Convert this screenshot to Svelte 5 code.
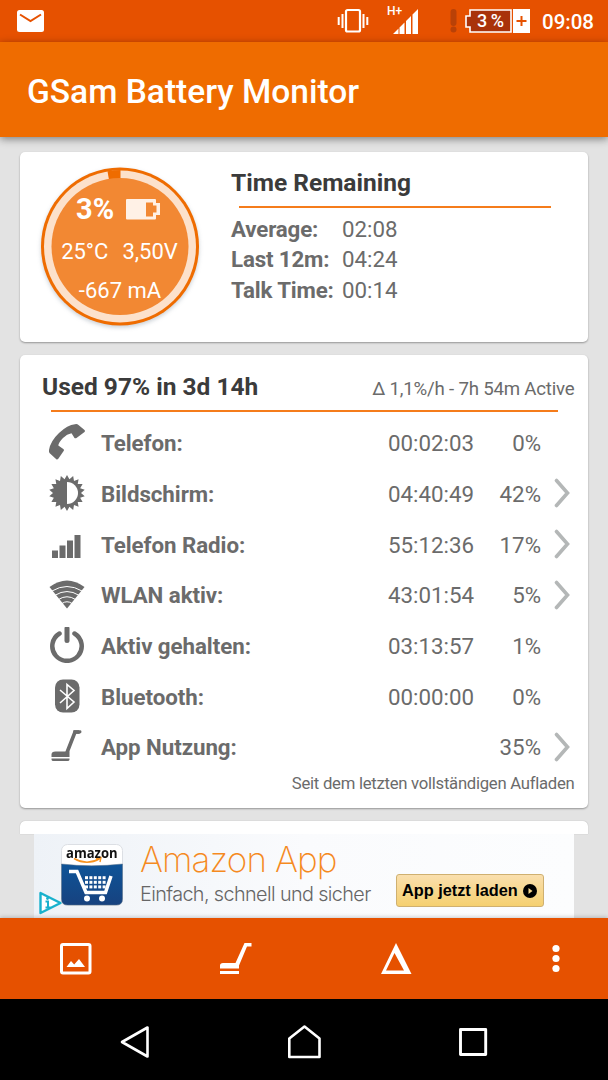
<script lang="ts">
	type Usage = {
		icon: string;
		label: string;
		time: string;
		percent: string;
		more: boolean;
	};

	let remaining = [
		{ label: 'Average:', value: '02:08' },
		{ label: 'Last 12m:', value: '04:24' },
		{ label: 'Talk Time:', value: '00:14' }
	];

	let usage: Usage[] = [
		{ icon: 'phone', label: 'Telefon:', time: '00:02:03', percent: '0%', more: false },
		{ icon: 'screen', label: 'Bildschirm:', time: '04:40:49', percent: '42%', more: true },
		{ icon: 'radio', label: 'Telefon Radio:', time: '55:12:36', percent: '17%', more: true },
		{ icon: 'wifi', label: 'WLAN aktiv:', time: '43:01:54', percent: '5%', more: true },
		{ icon: 'power', label: 'Aktiv gehalten:', time: '03:13:57', percent: '1%', more: false },
		{ icon: 'bluetooth', label: 'Bluetooth:', time: '00:00:00', percent: '0%', more: false },
		{ icon: 'apps', label: 'App Nutzung:', time: '', percent: '35%', more: true }
	];

	// sawtooth outline of the brightness icon
	const teeth = 18;
	const sun = Array.from({ length: teeth * 2 }, (_, i) => {
		const r = i % 2 ? 14 : 18;
		const a = (i * Math.PI) / teeth - Math.PI / 2;
		return `${(18 + r * Math.cos(a)).toFixed(2)},${(18 + r * Math.sin(a)).toFixed(2)}`;
	}).join(' ');

	const cartDots = [0, 1, 2, 3, 4].flatMap((x) => [0, 1, 2].map((y) => ({ x, y })));
</script>

<div class="screen">
	<div class="status">
		<svg class="mail" width="28" height="24" viewBox="0 0 28 24">
			<rect x="0" y="1" width="27" height="22" rx="2.500" fill="#fff" />
			<path d="M3 5.500l10.500 6.500 10.500-6.500" fill="none" stroke="#e65100" stroke-width="2" />
		</svg>
		<svg class="vibrate" width="32" height="26" viewBox="0 0 32 26">
			<rect x="9" y="2" width="14" height="21.500" rx="1.500" fill="none" stroke="#fff" stroke-width="2.200" />
			<path d="M5.500 6v14M26.500 6v14M1.700 9v8M30.300 9v8" stroke="#fff" stroke-width="2" />
		</svg>
		<div class="signal">
			<span>H+</span>
			<svg width="26" height="26" viewBox="0 0 26 26">
				<path d="M0 25l5.500-5.500v5.500zM6.500 25v-6.500l5-5v11.500zM13 25V12l5-5v18zM19.500 25V5.500l5.500-5.500v25z" fill="#fff" />
			</svg>
		</div>
		<svg class="alert" width="7" height="24" viewBox="0 0 7 24">
			<rect x="0.5" y="0" width="6" height="17" rx="3" fill="#b94107" />
			<circle cx="3.500" cy="20.500" r="3" fill="#b94107" />
		</svg>
		<div class="battery">
			<svg width="65" height="24" viewBox="0 0 65 24">
				<path d="M5 1h41v22H5v-5H1V7h4z" fill="#a9330a" stroke="#fff" stroke-width="1.600" />
				<rect x="48" y="0" width="17" height="24" fill="#fff" />
				<path d="M51.500 12h10M56.500 7v10" stroke="#e65100" stroke-width="2" />
			</svg>
			<span>3 %</span>
		</div>
		<span class="clock">09:08</span>
	</div>

	<header><h1>GSam Battery Monitor</h1></header>

	<main>
		<section class="card summary">
			<div class="gauge">
				<svg width="160" height="164" viewBox="0 0 160 164">
					<circle cx="79" cy="79.500" r="79" fill="#ef6c00" />
					<circle cx="79" cy="79.500" r="76" fill="#fce1cb" />
					<path d="M79.500 80V3a76.500 76.500 0 0 0-13 1.200z" fill="#ef6c00" />
					<circle cx="79" cy="79.500" r="68.500" fill="#f28833" />
				</svg>
				<div class="readings">
					<div class="level">
						<b>3%</b>
						<svg width="34" height="21" viewBox="0 0 34 21">
							<path d="M1 0h28q1 0 1 1v3h4v12h-4v3.500q0 1-1 1H1q-1 0-1-1V1q0-1 1-1zM20 3.500v14h7v-4h3.500v-7H27v-3z" fill="#fff1e6" fill-rule="evenodd" />
						</svg>
					</div>
					<div class="temp"><span>25°C</span><span>3,50V</span></div>
					<div class="current">-667 mA</div>
				</div>
			</div>
			<div class="remaining">
				<h2>Time Remaining</h2>
				<div class="rule"></div>
				{#each remaining as item}
					<div class="line"><b>{item.label}</b><span>{item.value}</span></div>
				{/each}
			</div>
		</section>

		<section class="card used">
			<div class="head">
				<h2>Used 97% in 3d 14h</h2>
				<span>Δ 1,1%/h - 7h 54m Active</span>
			</div>
			<div class="rule"></div>
			{#each usage as row}
				<div class="row">
					<svg class="icon" width="36" height="36" viewBox="0 0 36 36">
						{#if row.icon === 'phone'}
							<path d="M26 0.300q2-0.600 3.500 0.700l6 5q0.900 0.900 0 2l-8 6q-1.200 0.700-2 0l-3-4.700q-4.500 0.700-8.500 4.700-4.500 4.500-4.700 7.500l5 3.500q1 0.800 0.500 1.800l-5.500 8q-1 1.200-2 0.500l-6.800-6.300q-0.700-1-0.500-3Q1.500 17 10 9T26 0.300z" />
						{:else if row.icon === 'screen'}
							<polygon points={sun} />
							<path d="M18 7a11 11 0 0 1 0 22z" fill="#fff" />
						{:else if row.icon === 'radio'}
							<path d="M3 24.500h6v7.500H3zM10.500 19.500h6v12.500h-6zM18 14.500h6v17.500h-6zM25.500 9h6v23h-6z" />
						{:else if row.icon === 'wifi'}
							<path d="M0.500 11q17.500-13 35 0L18 32.500z" />
							<g fill="none" stroke="#fff" stroke-width="1">
								<path d="M3 15q15-9 30 0" />
								<path d="M6 19.300q12-7.500 24 0" />
								<path d="M9.500 23.500q8.500-5.500 17 0" />
								<path d="M13 27.500q5-3.500 10 0" />
							</g>
						{:else if row.icon === 'power'}
							<g fill="none" stroke="#6b6b6b" stroke-linecap="round">
								<path d="M10.500 6.500a14.700 14.700 0 1 0 15 0" stroke-width="4.500" />
								<path d="M18 1.500v12" stroke-width="5" />
							</g>
						{:else if row.icon === 'bluetooth'}
							<rect x="6" y="1.500" width="24.500" height="33" rx="8" />
							<path d="M11 12l14 12-7 6.500v-24l7 6-14 12.500" fill="none" stroke="#fff" stroke-width="1.600" />
						{:else}
							<path d="M30 4h-4L18 24.500" fill="none" stroke="#6b6b6b" stroke-width="3.600" />
							<path d="M24.500 2.200h7q1.500 0.300 0.800 2l-1.300 1.600h-7z" />
							<path d="M2.500 29v-2.500q0-3 4-3h14V29zM2.500 30.500h18v1q0 1.500-2 1.500h-14q-2 0-2-1.500z" />
						{/if}
					</svg>
					<b>{row.label}</b>
					<span class="time">{row.time}</span>
					<span class="percent">{row.percent}</span>
					<span class="more">
						{#if row.more}
							<svg width="16" height="30" viewBox="0 0 16 30">
								<path d="M2.500 2.500L13.500 15 2.500 27.500" fill="none" stroke="#b4b7b7" stroke-width="3.600" stroke-linecap="round" />
							</svg>
						{/if}
					</span>
				</div>
			{/each}
			<p>Seit dem letzten vollständigen Aufladen</p>
		</section>

		<section class="card next"></section>

		<div class="ad">
			<svg class="badge" width="90" height="84" viewBox="0 0 90 84">
				<defs>
					<linearGradient id="blue" x1="0" y1="0" x2="0" y2="1">
						<stop offset="0" stop-color="#0e5498" />
						<stop offset="1" stop-color="#17427f" />
					</linearGradient>
				</defs>
				<rect x="27.500" y="10.500" width="61" height="61" rx="6" fill="#fff" stroke="#dcdfe4" />
				<path d="M27.500 30q30 3.500 61 0v35q0 6-6 6h-49q-6 0-6-6z" fill="url(#blue)" stroke="#5b7088" stroke-width="0.500" />
				<path d="M40 24.500q13 7.500 26 0" fill="none" stroke="#f79320" stroke-width="1.500" />
				<path d="M62 24.500l5-1-1 4.500" fill="none" stroke="#f79320" stroke-width="1.400" />
				<path d="M35 37.500h8l9 21h19.500L77 42" fill="none" stroke="#fff" stroke-width="3.500" />
				{#each cartDots as dot}
					<rect x={51 + dot.x * 4.4} y={42.2 + dot.y * 4.6} width="3" height="3" fill="#fff" />
				{/each}
				<circle cx="53" cy="64.500" r="3" fill="#fff" />
				<circle cx="68" cy="64.500" r="3" fill="#fff" />
				<path d="M6.500 59v20l20-10z" fill="#fff" stroke="#19b1cd" stroke-width="2.400" stroke-linejoin="round" />
				<path d="M11.500 67.500h2.500v5.500M11.500 73.500h5" fill="none" stroke="#19b1cd" stroke-width="2" />
				<circle cx="13.500" cy="64.500" r="1.400" fill="#19b1cd" />
			</svg>
			<span class="brand">amazon</span>
			<div class="copy">
				<div class="title">Amazon App</div>
				<div class="sub">Einfach, schnell und sicher</div>
			</div>
			<button>
				<span>App jetzt laden</span>
				<svg width="14" height="14" viewBox="0 0 14 14">
					<circle cx="7" cy="7" r="7" />
					<path d="M5.500 4l4 3-4 3z" fill="#f8d98e" />
				</svg>
			</button>
		</div>
	</main>

	<div class="toolbar">
		<svg width="32" height="32" viewBox="0 0 32 32">
			<rect x="1.500" y="1.500" width="28.500" height="28.500" rx="1.500" fill="none" stroke="#fff" stroke-width="3" />
			<path d="M6.500 24l4.500-6 3.200 3.500 4.800-5.500 6 8z" fill="#fff" />
		</svg>
		<svg width="32" height="32" viewBox="0 0 32 32">
			<path d="M0 25.500v-3q0-2.500 3-2.500h12.500L24.500 0H31.500v3.500h-4.500L19 22.500V25.500zM0 28h19v3H0z" fill="#fff" />
		</svg>
		<svg width="32" height="32" viewBox="0 0 32 32">
			<path d="M15 0l15.500 31H0zM13.500 10L5 27.500h18z" fill="#fff" fill-rule="evenodd" />
		</svg>
		<svg class="dots" width="8" height="32" viewBox="0 0 8 32">
			<circle cx="4" cy="5.500" r="3.600" fill="#fff" />
			<circle cx="4" cy="15.500" r="3.600" fill="#fff" />
			<circle cx="4" cy="25.500" r="3.600" fill="#fff" />
		</svg>
	</div>

	<div class="nav">
		<svg width="34" height="34" viewBox="0 0 34 34" fill="none" stroke="#fff" stroke-width="2.600" stroke-linejoin="round">
			<path d="M30.500 2.500v29L5 17z" />
		</svg>
		<svg width="34" height="34" viewBox="0 0 34 34" fill="none" stroke="#fff" stroke-width="2.600" stroke-linejoin="round">
			<path d="M2.300 32V13.500L17.500 1.500l15 12V32z" />
		</svg>
		<svg width="34" height="34" viewBox="0 0 34 34" fill="none" stroke="#fff" stroke-width="2.900" stroke-linejoin="round">
			<rect x="4.500" y="4.500" width="25.200" height="25" />
		</svg>
	</div>
</div>

<style>
	:global(body) {
		margin: 0;
	}
	.screen {
		display: flex;
		flex-direction: column;
		width: 608px;
		height: 1080px;
		overflow: hidden;
		background: #e3e3e3;
		color: #6b6b6b;
		font-family: Roboto, sans-serif;
		font-size: 22.3px;
	}
	svg {
		display: block;
		flex: none;
	}
	h1,
	h2,
	p {
		margin: 0;
		white-space: nowrap;
	}
	.status {
		display: flex;
		align-items: center;
		height: 42px;
		flex: none;
		background: #e65100;
		color: #fff;
	}
	.mail {
		margin-left: 17px;
	}
	.vibrate {
		margin-left: 292px;
	}
	.signal {
		display: flex;
		height: 32px;
		margin-left: 18px;
		font-size: 12px;
		font-weight: 500;
	}
	.signal span {
		width: 6px;
		line-height: 12px;
		white-space: nowrap;
	}
	.signal svg {
		margin-top: 4px;
	}
	.alert {
		margin-left: 31px;
	}
	.battery {
		position: relative;
		margin-left: 8px;
	}
	.battery span {
		position: absolute;
		left: 12px;
		top: 0;
		font-size: 18px;
		font-weight: 500;
		line-height: 24px;
		letter-spacing: -0.5px;
		white-space: nowrap;
	}
	.clock {
		margin: 2px 0 0 12px;
		font-size: 20.5px;
		font-weight: 500;
	}
	header {
		position: relative;
		display: flex;
		align-items: center;
		height: 95px;
		flex: none;
		padding-left: 27px;
		background: #ef6c00;
		box-shadow: 0 2px 8px rgba(0, 0, 0, 0.45);
	}
	h1 {
		padding-top: 4px;
		color: #fff;
		font-size: 33.5px;
		font-weight: 500;
	}
	main {
		display: flex;
		flex-direction: column;
		height: 781px;
		flex: none;
		padding: 0 20px;
	}
	.card {
		flex: none;
		box-sizing: border-box;
		border-radius: 5px;
		background: #fff;
		box-shadow: 0 1px 2px rgba(0, 0, 0, 0.35);
	}
	.rule {
		height: 2px;
		background: #f57c1b;
	}
	h2 {
		color: #3b3b3b;
		font-size: 24.5px;
		font-weight: 700;
		line-height: 30px;
	}
	.summary {
		display: flex;
		height: 190px;
		margin-top: 15px;
		padding: 15px 0 0 21px;
	}
	.gauge {
		position: relative;
		width: 160px;
		height: 160px;
	}
	.gauge svg {
		filter: drop-shadow(0 2px 2px rgba(80, 100, 120, 0.3));
	}
	.readings {
		position: absolute;
		inset: 0;
		color: #fff;
		font-size: 22px;
		line-height: 30px;
	}
	.level {
		display: flex;
		align-items: center;
		gap: 12px;
		padding: 27px 0 0 35px;
		font-size: 29px;
	}
	.gauge .level svg {
		filter: none;
	}
	.temp {
		display: flex;
		justify-content: center;
		gap: 14px;
		margin-top: 13px;
		margin-left: -3px;
	}
	.current {
		margin-top: 9px;
		margin-left: -2px;
		text-align: center;
	}
	.remaining {
		margin-left: 30px;
		padding-top: 1px;
	}
	.remaining .rule {
		width: 312px;
		margin: 8px 0 6px 8px;
	}
	.line {
		display: flex;
		line-height: 30.4px;
	}
	.line b {
		width: 111px;
		letter-spacing: -0.15px;
	}
	.used {
		height: 453px;
		margin-top: 13px;
		padding: 17px 13.5px 0 22px;
	}
	.head {
		display: flex;
		justify-content: space-between;
		align-items: center;
	}
	.head span {
		padding-top: 3px;
		font-size: 18.7px;
		letter-spacing: -0.22px;
		white-space: nowrap;
	}
	.used .rule {
		width: 507px;
		margin: 8px 0 6px 8.5px;
	}
	.row {
		display: flex;
		align-items: center;
		height: 50.65px;
	}
	.icon {
		margin: -2px 16px 0 7px;
		fill: #6b6b6b;
	}
	.row b {
		flex: 1;
		letter-spacing: -0.05px;
	}
	.percent {
		width: 67px;
		text-align: right;
	}
	.more {
		width: 20.5px;
		margin: -1px 0 0 13px;
	}
	.used p {
		margin-top: 2px;
		font-size: 16.7px;
		line-height: 20px;
		letter-spacing: -0.27px;
		text-align: right;
	}
	.next {
		height: 13px;
		margin-top: 13px;
		border-radius: 5px 5px 0 0;
		box-shadow: 0 0 1px rgba(0, 0, 0, 0.3);
	}
	.ad {
		position: relative;
		display: flex;
		height: 84px;
		flex: none;
		margin: 0 14px;
		background: linear-gradient(90deg, #eef2f7, #fafbfd 50%, #fcfdfe);
	}
	.brand {
		position: absolute;
		left: 32px;
		top: 9px;
		color: #111;
		font-family: 'Open Sans', sans-serif;
		font-size: 15px;
		font-weight: 700;
		line-height: 18px;
		transform: scaleX(0.87);
		transform-origin: left;
	}
	.copy {
		width: 272px;
		padding-left: 16px;
		font-family: Inter, sans-serif;
		white-space: nowrap;
	}
	.title {
		margin-top: 4px;
		color: #f58a1f;
		font-size: 35px;
		font-weight: 200;
		line-height: 42px;
		letter-spacing: -0.9px;
	}
	.sub {
		color: #666;
		font-size: 19.8px;
		font-weight: 300;
		line-height: 29px;
		letter-spacing: -0.6px;
	}
	button {
		position: absolute;
		left: 362px;
		top: 40px;
		display: flex;
		align-items: center;
		justify-content: space-between;
		width: 148px;
		height: 33px;
		padding: 0 6px 0 5px;
		border: 1px solid #cfb070;
		border-radius: 3px;
		background: linear-gradient(#fadfae, #f5d070);
		color: #000;
		font-family: 'Liberation Sans', sans-serif;
		font-size: 16.3px;
		font-weight: 700;
		white-space: nowrap;
	}
	.toolbar {
		position: relative;
		display: flex;
		height: 81px;
		flex: none;
		box-sizing: border-box;
		gap: 128.5px;
		padding: 25px 0 0 59.5px;
		background: #e65100;
		box-shadow: 0 -1px 4px rgba(0, 0, 0, 0.2);
	}
	.dots {
		margin-left: 10.5px;
	}
	.nav {
		display: flex;
		justify-content: space-between;
		height: 81px;
		flex: none;
		box-sizing: border-box;
		padding: 26px 118px 0 117px;
		background: #000;
	}
</style>
